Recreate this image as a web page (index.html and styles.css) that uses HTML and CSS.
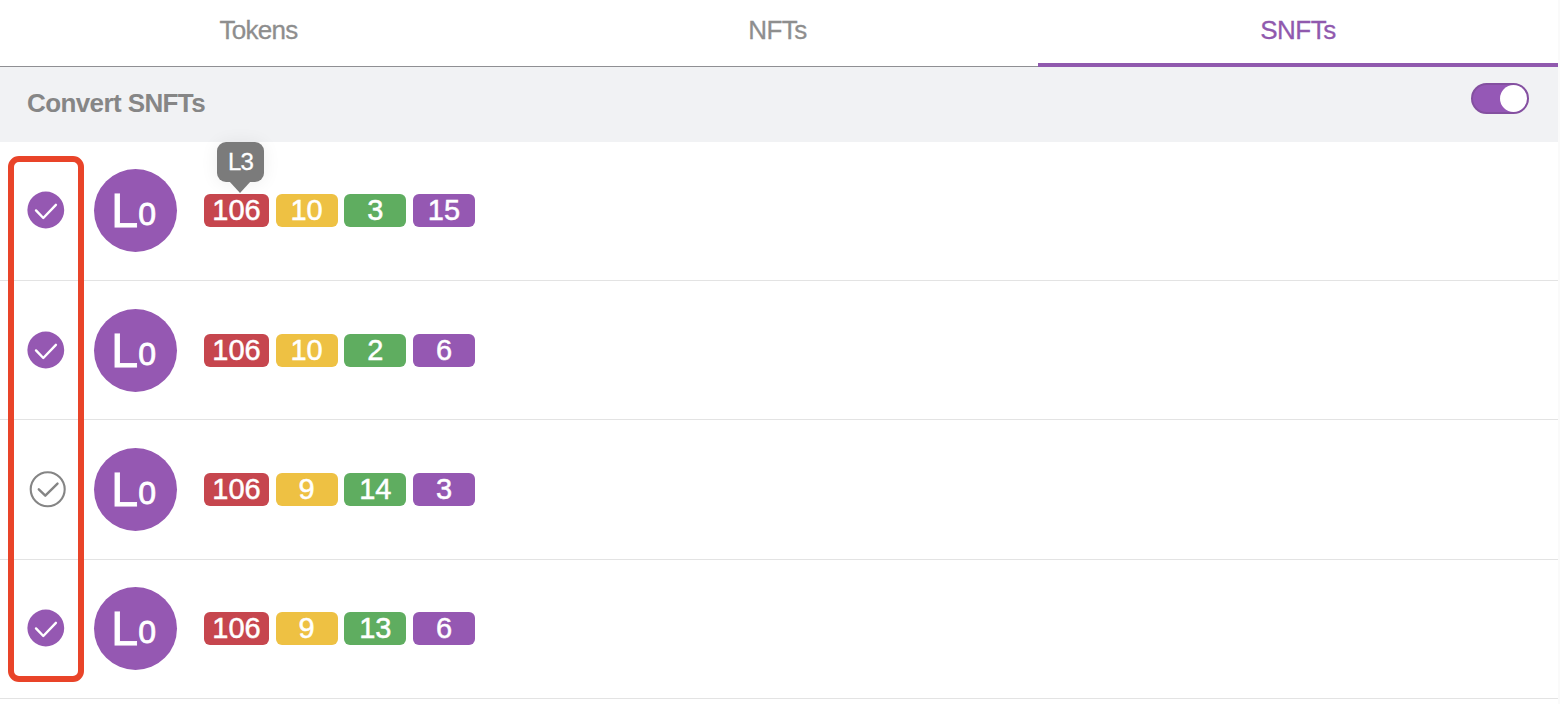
FILE: index.html
```html
<!DOCTYPE html>
<html lang="en">
<head>
<meta charset="utf-8">
<title>Convert SNFTs</title>
<link rel="stylesheet" href="styles.css">
</head>
<body>
<svg class="defs" width="0" height="0" aria-hidden="true">
  <symbol id="checked" viewBox="0 0 40 40">
    <circle cx="18.8" cy="20" r="18.4" fill="#9558b2"/>
    <path d="M9 20.4 16.3 28 28.9 14.8" fill="none" stroke="#fff" stroke-width="2.4" stroke-linecap="round" stroke-linejoin="round"/>
  </symbol>
  <symbol id="unchecked" viewBox="0 0 40 40">
    <circle cx="20.7" cy="20.2" r="17" fill="none" stroke="#858585" stroke-width="2.1"/>
    <path d="M11.8 20.3 18.3 26.7 30.5 14.6" fill="none" stroke="#858585" stroke-width="2.4" stroke-linecap="round" stroke-linejoin="round"/>
  </symbol>
</svg>
<main class="panel">
  <nav class="tabs">
    <div class="tab"><span class="tokens">Tokens</span></div>
    <div class="tab"><span>NFTs</span></div>
    <div class="tab active"><span>SNFTs</span></div>
  </nav>
  <header class="toolbar">
    <h1>Convert SNFTs</h1>
    <div class="switch"><i></i></div>
  </header>
  <section class="list">
    <div class="row">
      <svg class="check"><use href="#checked"/></svg>
      <div class="avatar">L<small>0</small></div>
      <div class="badges"><b class="red">106<span class="tip">L3</span></b><b class="yellow">10</b><b class="green">3</b><b class="purple">15</b></div>
    </div>
    <div class="row low">
      <svg class="check"><use href="#checked"/></svg>
      <div class="avatar">L<small>0</small></div>
      <div class="badges"><b class="red">106</b><b class="yellow">10</b><b class="green">2</b><b class="purple">6</b></div>
    </div>
    <div class="row low tall">
      <svg class="check"><use href="#unchecked"/></svg>
      <div class="avatar">L<small>0</small></div>
      <div class="badges"><b class="red">106</b><b class="yellow">9</b><b class="green">14</b><b class="purple">3</b></div>
    </div>
    <div class="row">
      <svg class="check"><use href="#checked"/></svg>
      <div class="avatar">L<small>0</small></div>
      <div class="badges"><b class="red">106</b><b class="yellow">9</b><b class="green">13</b><b class="purple">6</b></div>
    </div>
    <div class="highlight"></div>
  </section>
</main>
</body>
</html>
```
FILE: styles.css
```css
* { box-sizing: border-box; }
body {
  margin: 0;
  height: 704px;
  overflow: hidden;
  background: #fafafa;
  font-family: "Liberation Sans", Arial, sans-serif;
}
.defs { position: absolute; }
.panel { width: 1558px; height: 704px; background: #fff; }
.tabs {
  display: grid;
  grid-template-columns: 517px 521px 520px;
  height: 67px;
  border-bottom: 1px solid #8f8f93;
}
.tab {
  height: 67px;
  padding-top: 15px;
  text-align: center;
  font-size: 26px;
  line-height: 30px;
  letter-spacing: -0.5px;
  color: #8e8e8e;
  -webkit-text-stroke: .3px currentColor;
}
.tab .tokens { letter-spacing: -0.7px; }
.tab.active {
  color: #9059ae;
  border-bottom: 4px solid #9059ae;
  border-radius: 2px 2px 0 0;
}
.toolbar {
  display: flex;
  justify-content: space-between;
  height: 75px;
  padding: 16px 29px 0 27px;
  background: #f1f2f4;
}
h1 {
  margin: 5px 0 0;
  font-size: 26px;
  line-height: 30px;
  letter-spacing: -0.6px;
  color: #868686;
}
.switch {
  display: flex;
  justify-content: flex-end;
  width: 58px;
  height: 31px;
  border: 2px solid #8450a0;
  border-radius: 16px;
  background: #9558b6;
}
.switch i { width: 27px; height: 27px; border-radius: 50%; background: #fff; }
.list { position: relative; }
.row {
  display: flex;
  height: 139px;
  padding: 27px 0 0 27px;
  border-bottom: 1px solid #e3e3e3;
}
.row.low { padding-top: 28px; }
.row.tall { height: 140px; }
.check { width: 40px; height: 40px; margin: 21px 27px 0 0; }
.avatar {
  display: flex;
  align-items: baseline;
  width: 83px;
  height: 83px;
  padding: 13px 0 0 17px;
  border-radius: 50%;
  background: #9558b2;
  color: #fff;
  font-size: 49px;
  line-height: 56px;
  -webkit-text-stroke: .8px #fff;
}
.avatar small { margin-bottom: 2px; font-size: 32px; line-height: 36px; transform: translateY(-2px); }
.badges { display: flex; gap: 6.5px; margin: 25px 0 0 27px; }
.badges b {
  position: relative;
  width: 62.2px;
  height: 33px;
  border-radius: 6px;
  text-align: center;
  font-size: 29px;
  font-weight: 400;
  line-height: 32px;
  color: #fff;
  -webkit-text-stroke: .5px #fff;
}
.badges .red { width: 65px; }
.red { background: #c6464e; }
.yellow { background: #eec143; }
.green { background: #5fad60; }
.purple { background: #9558b2; }
.tip {
  position: absolute;
  left: 13px;
  top: -52px;
  width: 47px;
  height: 40px;
  border-radius: 9px;
  background: #7b7b7b;
  box-shadow: 0 1px 18px rgba(0, 0, 0, .07);
  font-size: 24px;
  line-height: 40px;
  letter-spacing: -0.8px;
  -webkit-text-stroke: .3px #fff;
}
.tip::after {
  content: "";
  position: absolute;
  left: 12px;
  top: 39px;
  border: 11.5px solid transparent;
  border-top: 12px solid #7b7b7b;
  border-bottom: 0;
}
.highlight {
  position: absolute;
  left: 8.4px;
  top: 14.2px;
  width: 76px;
  height: 526px;
  border: 6px solid #e94429;
  border-radius: 11px;
}
```
